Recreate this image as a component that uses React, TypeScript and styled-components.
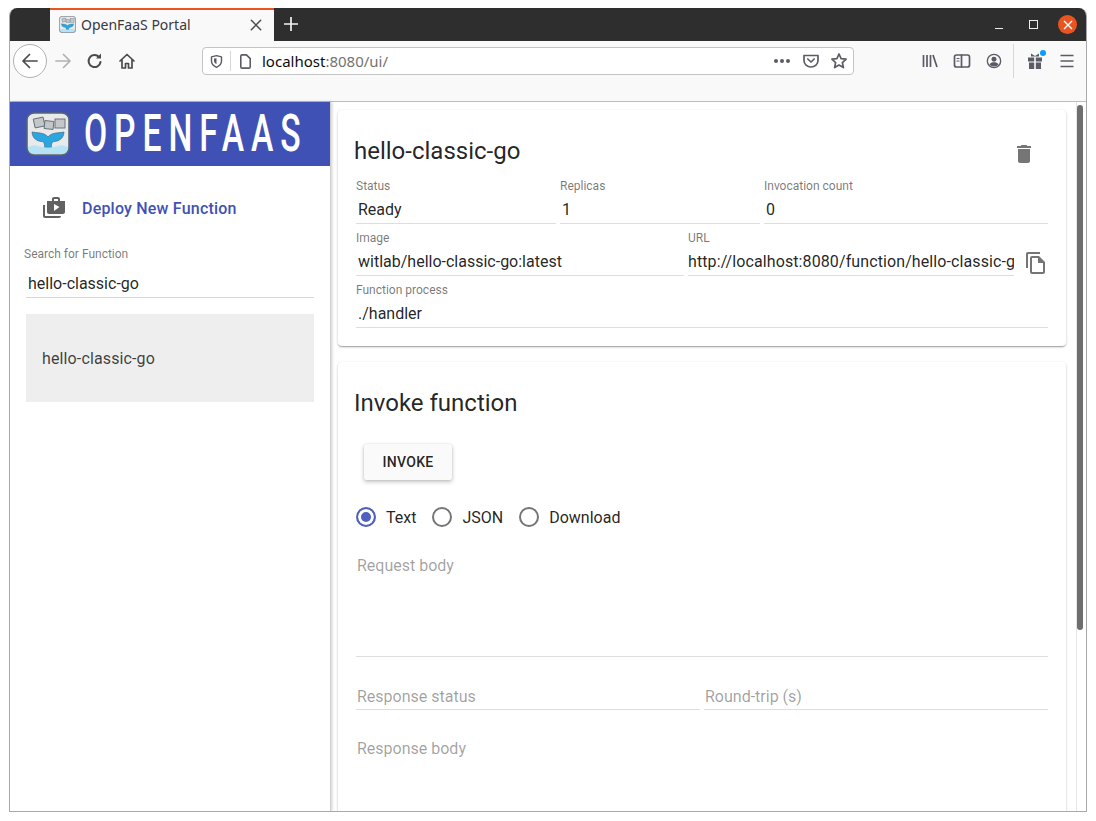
import React from "react";
import styled, { createGlobalStyle } from "styled-components";

const GlobalStyle = createGlobalStyle`
  html, body { margin: 0; padding: 0; background: #fff; }
  body { font-family: Roboto, "Liberation Sans", sans-serif; color: rgba(0, 0, 0, 0.87); }
`;

const fields = {
  top: [
    { label: "Status", value: "Ready", flex: 200 },
    { label: "Replicas", value: "1", flex: 200 },
    { label: "Invocation count", value: "0", flex: 284 },
  ],
};

const DeleteIcon = () => (
  <svg width="24" height="24" viewBox="0 0 24 24" fill="#757575">
    <path d="M6 19c0 1.1.9 2 2 2h8c1.1 0 2-.9 2-2V7H6v12zM19 4h-3.5l-1-1h-5l-1 1H5v2h14V4z" />
  </svg>
);

const CopyIcon = () => (
  <svg width="24" height="24" viewBox="0 0 24 24" fill="#757575">
    <path d="M16 1H4c-1.1 0-2 .9-2 2v14h2V3h12V1zm-1 4H8c-1.1 0-1.99.9-1.99 2L6 21c0 1.1.89 2 1.99 2H19c1.1 0 2-.9 2-2V11l-6-6zM8 21V7h6v5h5v9H8z" />
  </svg>
);

const DeployIcon = () => (
  <svg width="24" height="24" viewBox="0 0 24 24" fill="#616161">
    <path d="M3 9H1v11c0 1.11.89 2 2 2h14c1.11 0 2-.89 2-2H3V9zm15-4V3c0-1.11-.89-2-2-2h-4c-1.11 0-2 .89-2 2v2H5v11c0 1.11.89 2 2 2h14c1.11 0 2-.89 2-2V5h-5zm-6-2h4v2h-4V3zm0 12V8l5.5 3-5.5 4z" />
  </svg>
);

const Logo: React.FC<{ size?: number }> = ({ size = 44 }) => (
  <svg width={size} height={size} viewBox="0 0 44 44">
    <rect x="1" y="1" width="42" height="42" rx="7" fill="#e9e9e9" />
    <g fill="#c4c7ca" stroke="#5f6a74" strokeWidth="0.9">
      <rect x="8" y="6" width="10" height="9" transform="rotate(-12 13 10)" />
      <rect x="18.5" y="9" width="9" height="8" transform="rotate(6 23 13)" />
      <rect x="29" y="7" width="10" height="9" />
    </g>
    <path
      d="M6 20c5 1 8 .5 12 2 2 1 3.500 2 4 3 .5-1 2-2 4-3 4-1.500 8-1 12-2-.5 6-4 9-10 9.500-2 .5-3 2-2.500 8h-7c.5-6-.5-7.500-2.500-8-6-.5-9.500-3.500-10-9.500z"
      fill="#2aa7e0"
      stroke="#3a6d8c"
      strokeWidth="0.7"
    />
    <path d="M2 35c4-2 8-2 12-.5 5 1.500 11 1.500 16 0 4-1.500 8-1.500 12 .5v2c0 3-2 5-5 5H7c-3 0-5-2-5-5z" fill="#b5e3f5" />
    <rect x="1" y="1" width="42" height="42" rx="7" fill="none" stroke="#566573" strokeWidth="1.6" />
  </svg>
);

const Glyph: React.FC<{ children: React.ReactNode; size?: number }> = ({ children, size = 18 }) => (
  <svg
    width={size}
    height={size}
    viewBox="0 0 18 18"
    fill="none"
    stroke="currentColor"
    strokeWidth="1.7"
    strokeLinecap="round"
    strokeLinejoin="round"
  >
    {children}
  </svg>
);

const App: React.FC = () => {
  return (
    <>
      <GlobalStyle />
      <Page>
        <Window>
          <TitleBar>
            <TabGap />
            <Tab>
              <TabFavicon>
                <Logo size={17} />
              </TabFavicon>
              <TabTitle>OpenFaaS Portal</TabTitle>
              <TabClose>
                <Glyph size={14}>
                  <path d="M3 3l12 12M15 3L3 15" strokeWidth="1.9" />
                </Glyph>
              </TabClose>
            </Tab>
            <NewTab>
              <Glyph size={18}>
                <path d="M9 2v14M2 9h14" strokeLinecap="butt" />
              </Glyph>
            </NewTab>
            <WindowButtons>
              <MinimizeButton />
              <MaximizeButton />
              <CloseButton>
                <svg width="10" height="10" viewBox="0 0 10 10" stroke="#fff" strokeWidth="1.4">
                  <path d="M1 1l8 8M9 1L1 9" />
                </svg>
              </CloseButton>
            </WindowButtons>
          </TitleBar>

          <NavBar>
            <BackButton>
              <Glyph size={18}>
                <path d="M16 9H2M8.5 2.5L2 9l6.5 6.5" />
              </Glyph>
            </BackButton>
            <NavIcon $disabled>
              <Glyph size={18}>
                <path d="M2 9h14M9.5 2.5L16 9l-6.5 6.5" />
              </Glyph>
            </NavIcon>
            <NavIcon>
              <Glyph size={18}>
                <path d="M14.5 10a6 6 0 1 1-1.5-5" strokeWidth="2" />
                <path d="M15 1.5v5h-5z" fill="currentColor" stroke="none" />
              </Glyph>
            </NavIcon>
            <NavIcon>
              <Glyph size={18}>
                <path d="M2 9l7-6.5L16 9M4 7.5V16h3.5v-4.5h3V16H14V7.5" />
              </Glyph>
            </NavIcon>
            <UrlBar>
              <UrlIcon>
                <Glyph size={15}>
                  <path d="M3 3.5L9 2l6 1.5v5c0 3.5-2.5 6-6 7.5-3.5-1.5-6-4-6-7.5z" />
                  <path d="M6 5.5L9 5v7c-2-1-3-2-3-4z" fill="currentColor" stroke="none" />
                </Glyph>
              </UrlIcon>
              <UrlDivider />
              <UrlIcon>
                <Glyph size={17}>
                  <path d="M4 3.5C4 2.5 4.5 2 5.5 2H10l4 4v8.5c0 1-.5 1.5-1.5 1.5h-7C4.5 16 4 15.5 4 14.5z" />
                </Glyph>
              </UrlIcon>
              <UrlText>
                localhost<UrlMuted>:8080/ui/</UrlMuted>
              </UrlText>
              <UrlActions>
                <Dots>
                  <span />
                  <span />
                  <span />
                </Dots>
                <ActionIcon>
                  <Glyph size={18}>
                    <path d="M2 3.5h14v5a7 6.5 0 0 1-14 0z" />
                    <path d="M5.8 7L9 10l3.2-3" />
                  </Glyph>
                </ActionIcon>
                <ActionIcon>
                  <Glyph size={18}>
                    <path d="M9 2l2.1 4.6 5 .6-3.7 3.4 1 5L9 13.1l-4.4 2.500 1-5L1.900 7.200l5-.6z" />
                  </Glyph>
                </ActionIcon>
              </UrlActions>
            </UrlBar>
            <ToolIcons>
              <ToolIcon>
                <Glyph size={18}>
                  <path d="M2.5 3v12M6 3v12M9.5 3v12M12 3l4 12" strokeLinecap="butt" />
                </Glyph>
              </ToolIcon>
              <ToolIcon>
                <Glyph size={18}>
                  <rect x="1.5" y="3" width="15" height="12" rx="2" />
                  <path d="M8.5 3v12" />
                  <path d="M4 6.5h2M4 9h2" strokeWidth="1.2" />
                </Glyph>
              </ToolIcon>
              <ToolIcon>
                <Glyph size={16}>
                  <circle cx="9" cy="9" r="7.5" strokeWidth="1.5" />
                  <circle cx="9" cy="7" r="2.8" fill="currentColor" stroke="none" />
                  <path d="M3.8 13c1-2 3-2.6 5.2-2.6s4.2.6 5.2 2.6c-1.3 1.4-3.1 2.2-5.2 2.2s-3.9-.8-5.200-2.200z" fill="currentColor" stroke="none" />
                </Glyph>
              </ToolIcon>
              <ToolDivider />
              <ToolIcon>
                <GiftWrap>
                  <svg width="16" height="18" viewBox="0 0 16 18" fill="#5b5b66">
                    <path d="M4 1.5l4 2.5 4-2.5v3H4z" />
                    <rect x="1" y="5.5" width="6.2" height="4" />
                    <rect x="8.8" y="5.5" width="6.2" height="4" />
                    <rect x="2" y="10.5" width="5.2" height="6.5" />
                    <rect x="8.8" y="10.5" width="5.2" height="6.5" />
                  </svg>
                  <GiftBadge />
                </GiftWrap>
              </ToolIcon>
              <ToolIcon>
                <Glyph size={18}>
                  <path d="M2.5 3.5h13M2.5 9h13M2.5 14.5h13" strokeLinecap="butt" />
                </Glyph>
              </ToolIcon>
            </ToolIcons>
          </NavBar>

          <Content>
            <Sidebar>
              <Brand>
                <Logo />
                <BrandName>OPENFAAS</BrandName>
              </Brand>
              <DeployRow>
                <DeployIcon />
                <DeployLabel>Deploy New Function</DeployLabel>
              </DeployRow>
              <SearchField>
                <SearchLabel>Search for Function</SearchLabel>
                <SearchValue>hello-classic-go</SearchValue>
              </SearchField>
              <FunctionItem>hello-classic-go</FunctionItem>
            </Sidebar>

            <Main>
              <Card>
                <CardHeader>
                  <CardTitle>hello-classic-go</CardTitle>
                  <DeleteButton>
                    <DeleteIcon />
                  </DeleteButton>
                </CardHeader>
                <FieldRow>
                  {fields.top.map((f) => (
                    <Field key={f.label} $flex={f.flex}>
                      <FieldLabel>{f.label}</FieldLabel>
                      <FieldValue>{f.value}</FieldValue>
                    </Field>
                  ))}
                </FieldRow>
                <FieldRow>
                  <Field $flex={328}>
                    <FieldLabel>Image</FieldLabel>
                    <FieldValue>witlab/hello-classic-go:latest</FieldValue>
                  </Field>
                  <Field $flex={326}>
                    <FieldLabel>URL</FieldLabel>
                    <UrlValue>http://localhost:8080/function/hello-classic-go</UrlValue>
                  </Field>
                  <CopyButton>
                    <CopyIcon />
                  </CopyButton>
                </FieldRow>
                <FieldRow>
                  <Field $flex={692}>
                    <FieldLabel>Function process</FieldLabel>
                    <FieldValue>./handler</FieldValue>
                  </Field>
                </FieldRow>
              </Card>

              <InvokeCard>
                <CardTitle>Invoke function</CardTitle>
                <InvokeButton>INVOKE</InvokeButton>
                <RadioGroup>
                  <RadioOption>
                    <Radio $checked />
                    Text
                  </RadioOption>
                  <RadioOption>
                    <Radio />
                    JSON
                  </RadioOption>
                  <RadioOption>
                    <Radio />
                    Download
                  </RadioOption>
                </RadioGroup>
                <RequestBody>Request body</RequestBody>
                <ResponseRow>
                  <ResponseField>Response status</ResponseField>
                  <ResponseField>Round-trip (s)</ResponseField>
                </ResponseRow>
                <ResponseBody>Response body</ResponseBody>
              </InvokeCard>
            </Main>

            <Scrollbar>
              <ScrollThumb />
            </Scrollbar>
          </Content>
        </Window>
      </Page>
    </>
  );
};

export default App;

const Page = styled.div`
  width: 1096px;
  height: 821px;
  padding: 8px 9px 9px;
  box-sizing: border-box;
  overflow: hidden;
`;

const Window = styled.div`
  width: 1078px;
  height: 804px;
  display: flex;
  flex-direction: column;
  overflow: hidden;
  background: #fff;
  border-radius: 8px 8px 0 0;
  border: 1px solid #a8a8a8;
  border-top: none;
  box-sizing: border-box;
`;

const TitleBar = styled.div`
  height: 33px;
  flex: none;
  display: flex;
  background: #2f2e2e;
  color: #f4f4f4;
`;

const TabGap = styled.div`
  width: 40px;
  flex: none;
`;

const Tab = styled.div`
  width: 224px;
  flex: none;
  display: flex;
  align-items: center;
  box-sizing: border-box;
  padding: 0 10px 2px 9px;
  background: #f9f9fa;
  border-top: 2px solid #e95420;
  color: #38383d;
`;

const TabFavicon = styled.div`
  width: 17px;
  height: 17px;
  flex: none;
`;

const TabTitle = styled.div`
  flex: 1;
  margin-left: 5px;
  font-family: "Noto Sans", sans-serif;
  font-size: 14px;
`;

const TabClose = styled.div`
  display: flex;
  color: #4a4a4f;
  margin-right: 1px;
`;

const NewTab = styled.div`
  width: 34px;
  display: flex;
  align-items: center;
  justify-content: center;
  padding-bottom: 1px;
`;

const WindowButtons = styled.div`
  margin-left: auto;
  display: flex;
  align-items: center;
  padding-right: 9px;
`;

const MinimizeButton = styled.div`
  width: 8px;
  height: 1px;
  background: #eee;
  margin-top: 8px;
  margin-right: 26px;
`;

const MaximizeButton = styled.div`
  width: 7px;
  height: 7px;
  border: 1px solid #eee;
  margin-right: 20px;
`;

const CloseButton = styled.div`
  width: 19px;
  height: 19px;
  border-radius: 50%;
  background: #e95420;
  display: flex;
  align-items: center;
  justify-content: center;
`;

const NavBar = styled.div`
  height: 61px;
  flex: none;
  box-sizing: border-box;
  padding: 3px 0 0 3px;
  display: flex;
  align-items: flex-start;
  background: #f9f9fa;
  border-bottom: 1px solid #bdbdbd;
  color: #5b5b66;
`;

const BackButton = styled.div`
  width: 34px;
  height: 34px;
  flex: none;
  box-sizing: border-box;
  border: 1px solid #b1b1b3;
  border-radius: 50%;
  background: #fff;
  display: flex;
  align-items: center;
  justify-content: center;
  color: #4a4a4f;
`;

const NavIcon = styled.div<{ $disabled?: boolean }>`
  width: 32px;
  height: 34px;
  flex: none;
  display: flex;
  align-items: center;
  justify-content: center;
  color: ${(props) => (props.$disabled ? "#b1b1b3" : "#4a4a4f")};
`;

const UrlBar = styled.div`
  width: 652px;
  height: 28px;
  margin: 3px 0 0 59px;
  flex: none;
  box-sizing: border-box;
  display: flex;
  align-items: center;
  padding-left: 5px;
  background: #fff;
  border: 1px solid #c4c4c6;
  border-radius: 4px;
`;

const UrlIcon = styled.div`
  display: flex;
  width: 17px;
  justify-content: center;
`;

const UrlDivider = styled.div`
  width: 1px;
  height: 20px;
  background: #d7d7db;
  margin: 0 6px 0 5px;
`;

const UrlText = styled.div`
  margin-left: 8px;
  font-family: "Noto Sans", sans-serif;
  font-size: 15px;
  color: #0c0c0d;
`;

const UrlMuted = styled.span`
  color: #737373;
`;

const UrlActions = styled.div`
  margin-left: auto;
  display: flex;
  align-items: center;
  gap: 10px;
  padding-right: 5px;
`;

const Dots = styled.div`
  display: flex;
  gap: 2px;
  margin-right: 2px;

  span {
    width: 4px;
    height: 4px;
    border-radius: 50%;
    background: #5b5b66;
  }
`;

const ActionIcon = styled.div`
  display: flex;
`;

const ToolIcons = styled.div`
  margin-left: 60px;
  display: flex;
  align-items: center;
  height: 34px;
`;

const ToolIcon = styled.div`
  width: 32px;
  display: flex;
  justify-content: center;
`;

const ToolDivider = styled.div`
  width: 1px;
  height: 34px;
  background: #d7d7db;
  margin: 0 5px 0 3px;
`;

const GiftWrap = styled.div`
  position: relative;
  display: flex;
`;

const GiftBadge = styled.span`
  position: absolute;
  top: -2px;
  right: -3px;
  width: 6px;
  height: 6px;
  border-radius: 50%;
  background: #0a9dff;
`;

const Content = styled.div`
  flex: 1;
  min-height: 0;
  display: flex;
  background: #fff;
`;

const Sidebar = styled.div`
  width: 321px;
  flex: none;
  box-sizing: border-box;
  background: #fff;
  border-right: 1px solid #cfcfcf;
  box-shadow: 1px 0 3px rgba(0, 0, 0, 0.2);
  position: relative;
`;

const Brand = styled.div`
  height: 64px;
  display: flex;
  align-items: center;
  padding-left: 16px;
  background: #3f51b5;
  overflow: hidden;

  svg {
    flex: none;
  }
`;

const BrandName = styled.div`
  flex: none;
  margin-left: 14px;
  color: #fff;
  font-family: Roboto, sans-serif;
  font-weight: 500;
  font-size: 51px;
  line-height: 64px;
  letter-spacing: 10.5px;
  white-space: nowrap;
  transform: scaleX(0.66);
  transform-origin: left center;
`;

const DeployRow = styled.div`
  display: flex;
  align-items: center;
  height: 24px;
  padding-left: 32px;
  margin-top: 30px;
`;

const DeployLabel = styled.div`
  margin-left: 16px;
  color: #3f51b5;
  font-size: 16px;
  font-weight: 500;
  letter-spacing: 0.2px;
`;

const SearchField = styled.div`
  margin: 27px 16px 0 16px;
`;

const SearchLabel = styled.div`
  font-size: 12px;
  line-height: 14px;
  color: rgba(0, 0, 0, 0.54);
  margin-left: -2px;
`;

const SearchValue = styled.div`
  margin-top: 6px;
  padding: 7px 2px 4px;
  line-height: 19px;
  font-size: 16px;
  border-bottom: 1px solid #d8d8d8;
`;

const FunctionItem = styled.div`
  margin: 16px 16px 0;
  height: 88px;
  display: flex;
  align-items: center;
  padding-left: 16px;
  background: #eeeeee;
  font-size: 16px;
  letter-spacing: 0.13px;
  color: rgba(0, 0, 0, 0.75);
`;

const Main = styled.div`
  flex: 1;
  min-width: 0;
  overflow: hidden;
  box-sizing: border-box;
  padding: 8px 10px 0 7px;
  display: flex;
  flex-direction: column;
  gap: 16px;
`;

const Card = styled.div`
  flex: none;
  height: 236px;
  box-sizing: border-box;
  padding: 16px 18px 0 16px;
  background: #fff;
  border-radius: 4px;
  box-shadow: 0 1px 3px rgba(0, 0, 0, 0.2), 0 1px 1px rgba(0, 0, 0, 0.14), 0 2px 1px -1px rgba(0, 0, 0, 0.12);
`;

const InvokeCard = styled(Card)`
  height: 600px;
  padding-top: 17px;
`;

const CardHeader = styled.div`
  display: flex;
  align-items: center;
  justify-content: space-between;
  height: 49px;
`;

const CardTitle = styled.div`
  font-size: 24px;
  line-height: 48px;
  font-weight: 400;
`;

const DeleteButton = styled.div`
  display: flex;
  margin: 7px 12px 0 0;
`;

const FieldRow = styled.div`
  display: flex;
  gap: 4px;
  margin-left: 2px;
  height: 52px;
`;

const Field = styled.div<{ $flex: number }>`
  width: ${(props) => props.$flex}px;
  flex: none;
  min-width: 0;
  box-sizing: border-box;
`;

const FieldLabel = styled.div`
  font-size: 12px;
  line-height: 14px;
  padding-top: 4px;
  color: rgba(0, 0, 0, 0.54);
`;

const FieldValue = styled.div`
  padding: 6px 2px 3px;
  line-height: 21px;
  height: 21px;
  font-size: 16px;
  border-bottom: 1px solid #dedede;
`;

const UrlValue = styled(FieldValue)`
  overflow: hidden;
  white-space: nowrap;
  padding-left: 0;
  padding-right: 0;
  letter-spacing: 0.1px;
`;

const CopyButton = styled.div`
  display: flex;
  margin: 24px 0 0 6px;
  height: 24px;
`;

const InvokeButton = styled.div`
  width: 88px;
  height: 36px;
  margin: 17px 0 0 10px;
  display: flex;
  align-items: center;
  justify-content: center;
  background: #fafafa;
  border-radius: 2px;
  font-size: 14px;
  font-weight: 500;
  letter-spacing: 0.3px;
  box-shadow: 0 2px 4px rgba(0, 0, 0, 0.24), 0 0 2px rgba(0, 0, 0, 0.12);
`;

const RadioGroup = styled.div`
  display: flex;
  gap: 16px;
  margin: 25px 0 0 2px;
  height: 24px;
`;

const RadioOption = styled.div`
  display: flex;
  align-items: center;
  gap: 10px;
  font-size: 16px;
`;

const Radio = styled.span<{ $checked?: boolean }>`
  width: 20px;
  height: 20px;
  flex: none;
  box-sizing: border-box;
  border-radius: 50%;
  border: 2px solid ${(props) => (props.$checked ? "#4f60bf" : "#757575")};
  background: ${(props) => (props.$checked ? "#4f60bf" : "transparent")};
  box-shadow: ${(props) => (props.$checked ? "inset 0 0 0 3px #fff" : "none")};
`;

const Placeholder = styled.div`
  font-size: 16px;
  color: rgba(0, 0, 0, 0.38);
  padding-left: 1px;
`;

const RequestBody = styled(Placeholder)`
  height: 100px;
  margin: 27px 0 0 2px;
  line-height: 19px;
  border-bottom: 1px solid #dedede;
`;

const ResponseRow = styled.div`
  display: flex;
  gap: 4px;
  margin: 30px 0 0 2px;
`;

const ResponseField = styled(Placeholder)`
  flex: 1;
  line-height: 19px;
  padding-bottom: 3px;
  border-bottom: 1px solid #dedede;
`;

const ResponseBody = styled(Placeholder)`
  margin: 29px 0 0 2px;
  line-height: 19px;
`;

const Scrollbar = styled.div`
  width: 10px;
  flex: none;
  box-sizing: border-box;
  padding: 3px 3px 0 0;
  background: #fff;
  border-left: 1px solid #e6e6e6;
`;

const ScrollThumb = styled.div`
  height: 525px;
  border-radius: 3px;
  background: #6e6e6e;
`;
